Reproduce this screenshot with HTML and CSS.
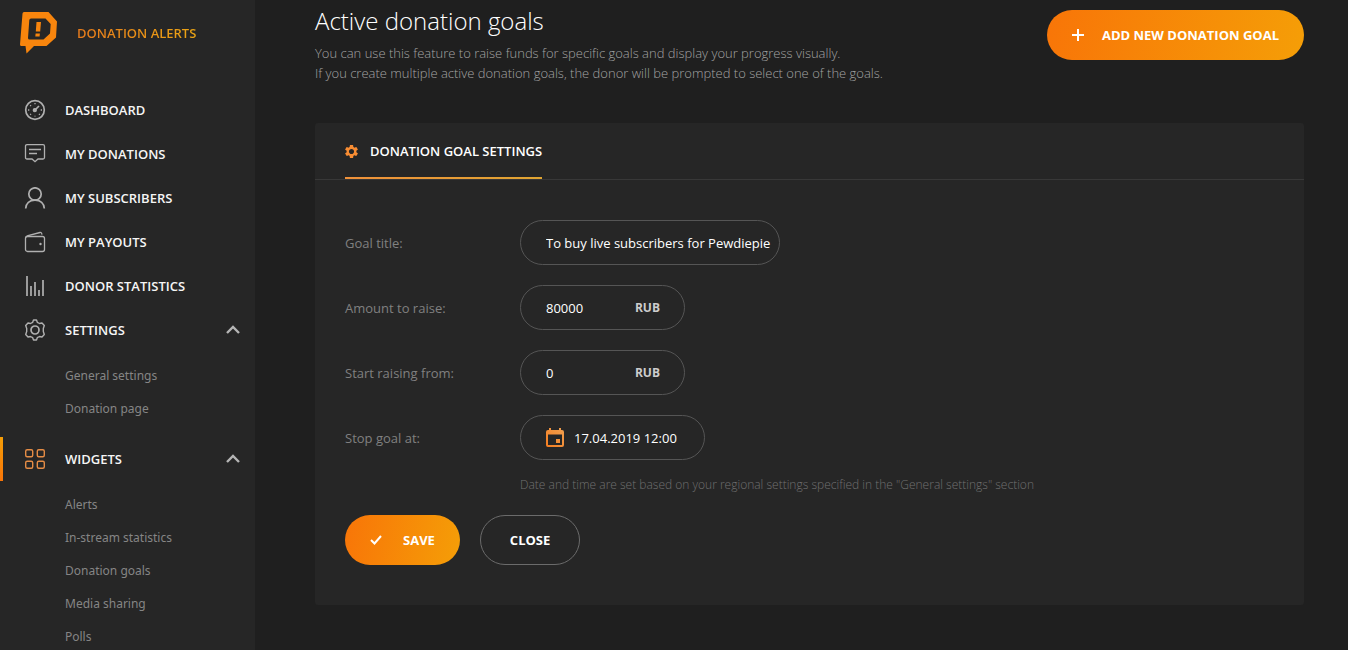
FILE: index.html
```html
<!DOCTYPE html>
<html lang="en">
<head>
<meta charset="utf-8">
<meta name="viewport" content="width=device-width, initial-scale=1">
<title>Donation goals</title>
<link rel="stylesheet" href="styles.css">
</head>
<body>
<svg class="defs" aria-hidden="true">
  <defs>
    <linearGradient id="orange" x1="0" y1="1" x2="1" y2="0">
      <stop offset="0" stop-color="#f57d20"/><stop offset="1" stop-color="#f0a050"/>
    </linearGradient>
  </defs>
</svg>
<div class="layout">
  <aside class="sidebar">
    <a class="brand" href="#">
      <svg class="brand-logo" width="38" height="42" viewBox="0 0 38 42" aria-hidden="true">
        <path fill="#f8850d" fill-rule="evenodd" d="M4 0H28.500L37 9.500L36 25.500L26.500 34H14L6.500 41.500L5.500 34H1.500Q0 34 0 32.500L2.500 1.500Q2.700 0 4 0ZM11 6.500Q9.500 6.500 9.300 8L8 26Q8 27.500 9.500 27.500H23.500L30 21.500L30.700 12L25.500 6.500Z"/>
        <path fill="#f8850d" d="M16.500 10H21L20.200 19.500H15.800ZM15.600 21.500H19.900L19.600 24.500H15.300Z"/>
      </svg>
      <span class="brand-name">DONATION ALERTS</span>
    </a>
    <nav class="menu">
      <a class="menu-item" href="#">
        <svg class="menu-icon" viewBox="0 0 22 22" aria-hidden="true"><circle cx="11" cy="11" r="9.300"/><circle cx="10.800" cy="11.200" r="1.300" fill="#b0b0b0"/><path d="M11 11L15 7"/><path d="M11 4V5.300M6.200 6.200L7 7M4 11H5.300M6.200 15.800L7 15M16.700 11H18M15 15L15.800 15.800M11 16.700V17.600" stroke-width="1.300"/></svg>
        DASHBOARD
      </a>
      <a class="menu-item" href="#">
        <svg class="menu-icon" viewBox="0 0 22 22" aria-hidden="true"><path stroke-width="1.300" d="M3 1.700H19Q20.500 1.700 20.500 3.200V14.500Q20.500 16 19 16H14L11 18.700L8 16H3Q1.500 16 1.500 14.500V3.200Q1.500 1.700 3 1.700ZM5 6.500H17M5 10.500H13"/></svg>
        MY DONATIONS
      </a>
      <a class="menu-item" href="#">
        <svg class="menu-icon" viewBox="0 0 22 22" aria-hidden="true"><circle cx="11" cy="7" r="6.200"/><path d="M1.700 21.500C2 16.500 5.500 13.200 11 13.200S20 16.500 20.300 21.500"/></svg>
        MY SUBSCRIBERS
      </a>
      <a class="menu-item" href="#">
        <svg class="menu-icon" viewBox="0 0 22 22" aria-hidden="true"><rect x="1.500" y="5.500" width="19" height="15" rx="2" stroke-width="1.300"/><path stroke-width="1.300" d="M1.800 6.300Q2.500 5 4 4.500L16 1.500Q17.700 1.200 18 3.700"/><circle cx="16.500" cy="13" r="1.200" fill="#b0b0b0" stroke="none"/></svg>
        MY PAYOUTS
      </a>
      <a class="menu-item" href="#">
        <svg class="menu-icon" viewBox="0 0 22 22" aria-hidden="true"><path d="M3 1V21M7 11V21M11 7V21M15 15V21M19 5V21"/></svg>
        DONOR STATISTICS
      </a>
      <button class="menu-item" type="button" aria-expanded="true">
        <svg class="menu-icon" viewBox="0 0 22 22" aria-hidden="true"><circle cx="11" cy="11" r="4"/><path stroke-width="1.400" stroke-linejoin="round" d="M9.500 1H12.500L13.300 3.300L15.500 4.500L18 4L20.300 6.500L19.300 9.500V12.500L20.300 15.500L18 18L15.500 17.500L13.300 18.700L12.500 21H9.500L8.700 18.700L6.500 17.500L4 18L1.700 15.500L2.700 12.500V9.500L1.700 6.500L4 4L6.500 4.500L8.700 3.300Z"/></svg>
        SETTINGS
        <svg class="menu-arrow" viewBox="0 0 14 10" aria-hidden="true"><path d="M1 8L7 2L13 8"/></svg>
      </button>
      <div class="submenu">
        <a href="#">General settings</a>
        <a href="#">Donation page</a>
      </div>
      <button class="menu-item menu-item-active" type="button" aria-expanded="true">
        <svg class="menu-icon menu-icon-active" viewBox="0 0 22 22" aria-hidden="true"><rect x="1.700" y="1.700" width="7" height="7" rx="1.500"/><rect x="13.300" y="1.700" width="7" height="7" rx="1.500"/><rect x="1.700" y="13.300" width="7" height="7" rx="1.500"/><rect x="13.300" y="13.300" width="7" height="7" rx="1.500"/></svg>
        WIDGETS
        <svg class="menu-arrow" viewBox="0 0 14 10" aria-hidden="true"><path d="M1 8L7 2L13 8"/></svg>
      </button>
      <div class="submenu">
        <a href="#">Alerts</a>
        <a href="#">In-stream statistics</a>
        <a href="#">Donation goals</a>
        <a href="#">Media sharing</a>
        <a href="#">Polls</a>
      </div>
    </nav>
  </aside>
  <main class="content">
    <header class="page-head">
      <div>
        <h1 class="page-title">Active donation goals</h1>
        <p class="page-text">You can use this feature to raise funds for specific goals and display your progress visually.<br>If you create multiple active donation goals, the donor will be prompted to select one of the goals.</p>
      </div>
      <button class="btn btn-primary btn-add" type="button">
        <svg width="12" height="12" viewBox="0 0 12 12" aria-hidden="true"><path stroke="#fff" stroke-width="2" d="M6 0V12M0 6H12"/></svg>
        ADD NEW DONATION GOAL
      </button>
    </header>
    <section class="panel">
      <div class="panel-head">
        <h2 class="tab">
          <svg width="13" height="13" viewBox="2 2 20 20" aria-hidden="true"><path fill="#f98d33" d="M19.430 12.980c.04-.32.07-.64.07-.98s-.03-.66-.07-.98l2.110-1.650c.19-.15.24-.42.12-.64l-2-3.460c-.12-.22-.39-.3-.61-.22l-2.490 1c-.52-.4-1.080-.73-1.690-.98l-.38-2.650C14.460 2.180 14.250 2 14 2h-4c-.25 0-.46.18-.49.42l-.38 2.650c-.61.25-1.170.59-1.690.98l-2.490-1c-.23-.09-.49 0-.61.22l-2 3.460c-.13.22-.07.49.12.64l2.110 1.650c-.04.32-.07.65-.07.98s.03.66.07.98l-2.110 1.650c-.19.15-.24.42-.12.64l2 3.460c.12.22.39.3.61.22l2.490-1c.52.4 1.080.73 1.690.98l.38 2.650c.03.24.24.42.49.42h4c.25 0 .46-.18.49-.42l.38-2.650c.61-.25 1.170-.59 1.690-.98l2.490 1c.23.09.49 0 .61-.22l2-3.460c.12-.22.07-.49-.12-.64l-2.110-1.650zM12 16c-2.200 0-4-1.800-4-4s1.800-4 4-4 4 1.800 4 4-1.800 4-4 4z"/></svg>
          DONATION GOAL SETTINGS
        </h2>
      </div>
      <form class="goal-form">
        <div class="field">
          <label for="title">Goal title:</label>
          <div class="box box-title"><input id="title" type="text" value="To buy live subscribers for Pewdiepie"></div>
        </div>
        <div class="field">
          <label for="amount">Amount to raise:</label>
          <div class="box box-money"><input id="amount" type="text" value="80000"><span class="unit">RUB</span></div>
        </div>
        <div class="field">
          <label for="start">Start raising from:</label>
          <div class="box box-money"><input id="start" type="text" value="0"><span class="unit">RUB</span></div>
        </div>
        <div class="field">
          <label for="stop">Stop goal at:</label>
          <div class="box box-date">
            <svg class="calendar" width="18" height="20" viewBox="0 0 18 20" aria-hidden="true"><path fill="url(#orange)" fill-rule="evenodd" d="M3 0H5V2H13V0H15V2H16Q18 2 18 4V17Q18 19 16 19H2Q0 19 0 17V4Q0 2 2 2H3ZM2 6.500V17H16V6.500ZM10 11H14V15H10Z"/></svg>
            <input id="stop" type="text" value="17.04.2019 12:00">
          </div>
        </div>
        <p class="hint">Date and time are set based on your regional settings specified in the "General settings" section</p>
        <div class="actions">
          <button class="btn btn-primary btn-save" type="button">
            <svg width="12" height="10" viewBox="0 0 12 10" aria-hidden="true"><path fill="none" stroke="#fff" stroke-width="2" d="M1 5L4.500 8.500L11 1"/></svg>
            SAVE
          </button>
          <button class="btn btn-outline" type="button">CLOSE</button>
        </div>
      </form>
    </section>
  </main>
</div>
</body>
</html>
```
FILE: styles.css
```css
* {
  box-sizing: border-box;
}

body {
  margin: 0;
  background: #1f1f1f;
  color: #fff;
  font: 13px/20px "Open Sans", "Noto Sans", sans-serif;
}

h1,
h2,
p {
  margin: 0;
}

a {
  color: inherit;
  text-decoration: none;
}

button,
input {
  border: 0;
  background: none;
  color: inherit;
  font: inherit;
}

button {
  cursor: pointer;
}

svg {
  flex: none;
}

.defs {
  position: absolute;
  width: 0;
  height: 0;
}

.layout {
  display: flex;
  height: 100vh;
}

/* Sidebar */
.sidebar {
  flex: 0 0 255px;
  overflow-y: auto;
  scrollbar-width: none;
  background: #262626;
}

.brand {
  display: flex;
  gap: 19px;
  padding: 12px 20px 34px;
}

.brand-name {
  align-self: center;
  background: linear-gradient(90deg, #e67a1b, #eba414);
  background-clip: text;
  color: transparent;
  font-weight: 600;
}

.menu-item {
  display: flex;
  align-items: center;
  gap: 19px;
  width: 100%;
  height: 44px;
  padding: 0 15px 0 24px;
  color: #f5f5f5;
  font-weight: 600;
  text-align: left;
}

.menu-icon {
  width: 22px;
  height: 22px;
  fill: none;
  stroke: #b0b0b0;
  stroke-width: 1.7;
}

.menu-item-active {
  background: linear-gradient(0deg, #f87508, #f59e07) left / 3px 100% no-repeat;
}

.menu-icon-active {
  stroke: #e58c45;
  stroke-width: 1.4;
}

.menu-arrow {
  width: 14px;
  height: 10px;
  margin-left: auto;
  fill: none;
  stroke: #b5b5b5;
  stroke-width: 2.4;
}

.submenu {
  display: flex;
  flex-direction: column;
  padding: 7px 15px 12px 65px;
  color: #858585;
  font-family: "Noto Sans", "Open Sans", sans-serif;
  font-size: 12px;
  line-height: 33px;
}

/* Content */
.content {
  flex: 1;
  min-width: 0;
  padding: 0 44px 0 60px;
}

.page-head {
  display: flex;
  justify-content: space-between;
  align-items: flex-start;
  gap: 20px;
  padding-bottom: 40px;
}

.page-title {
  font-size: 24px;
  font-weight: 300;
  line-height: 42px;
  padding-bottom: 1px;
}

.page-text {
  color: #a3a3a3;
  font-weight: 300;
}

.btn {
  display: flex;
  align-items: center;
  height: 50px;
  border-radius: 25px;
  padding: 0 25px;
  font-weight: 700;
  white-space: nowrap;
}

.btn-primary {
  background: linear-gradient(100deg, #f87508, #f59e07);
}

.btn-add {
  gap: 18px;
  margin-top: 10px;
}

.btn-save {
  gap: 21px;
}

.btn-outline {
  border: 1px solid #6b6b6b;
  padding: 0 29px;
}

.panel {
  border-radius: 3px;
  background: #262626;
}

.panel-head {
  display: flex;
  padding: 0 30px;
  border-bottom: 1px solid #383838;
}

.tab {
  display: flex;
  align-items: center;
  gap: 12px;
  height: 56px;
  background: linear-gradient(90deg, #f0913a, #e0a532) bottom / 100% 2px no-repeat;
  font-size: 13px;
  font-weight: 600;
}

.goal-form {
  display: flex;
  flex-direction: column;
  gap: 20px;
  padding: 40px 30px;
}

.field {
  display: grid;
  grid-template-columns: 175px 1fr;
  align-items: center;
  color: #808080;
}

.box {
  display: flex;
  align-items: center;
  height: 45px;
  border: 1px solid #555;
  border-radius: 23px;
  padding: 0 24px 0 25px;
  color: #fff;
}

.box input {
  flex: 1;
  min-width: 0;
  padding: 0;
  outline: 0;
}

.box-title {
  width: 260px;
  padding-right: 5px;
}

.box-money {
  width: 165px;
}

.box-date {
  gap: 10px;
  width: 185px;
}

.unit {
  color: #ccc;
  font-size: 12px;
  font-weight: 700;
}

.hint {
  margin: -5px 0 0 175px;
  color: #707070;
  font-size: 12px;
  font-weight: 300;
}

.actions {
  display: flex;
  gap: 20px;
}
```
